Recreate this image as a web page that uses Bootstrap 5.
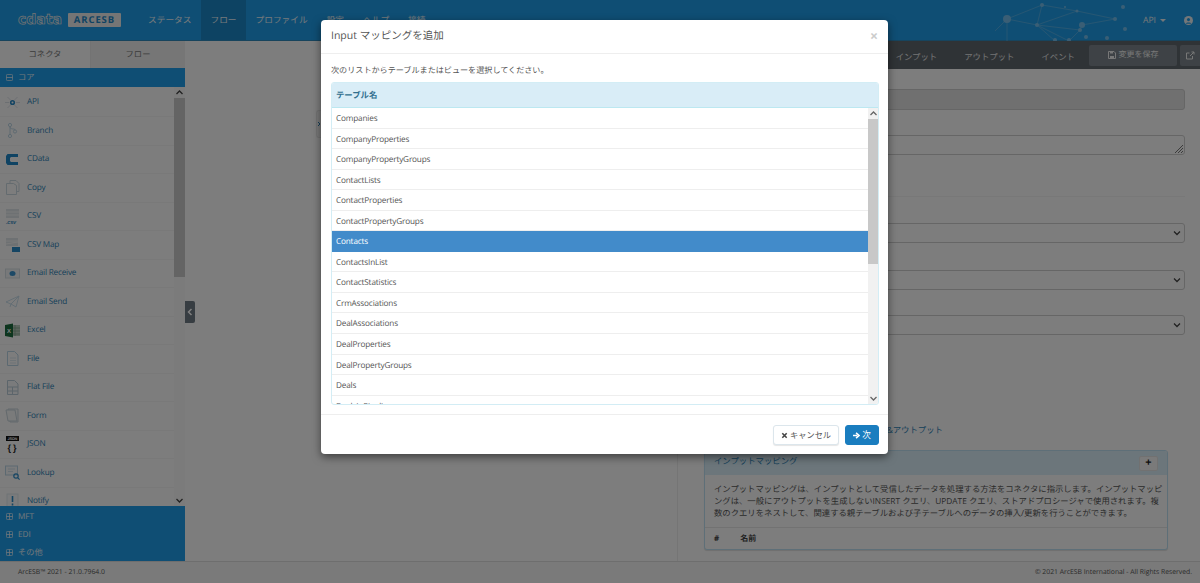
<!doctype html>
<html lang="ja">
<head>
<meta charset="utf-8">
<title>ArcESB</title>
<link href="https://cdn.jsdelivr.net/npm/bootstrap@5.3.0/dist/css/bootstrap.min.css" rel="stylesheet">
<style>
html,body{height:100%;overflow:hidden}
body{font-family:"Open Sans","Noto Sans CJK JP",sans-serif;font-size:8px;background:#fbfbfb;color:#555;text-rendering:geometricPrecision}
.app-page{height:583px;width:1200px;position:relative;overflow:hidden}
.top-bar{height:41px;background:#1f9de8;border-bottom:1px solid #2f88bb}
.brand-box{width:138.5px;height:40px;padding-left:18px;gap:6px;flex:none}
.brand-word{font-family:"DejaVu Sans",sans-serif;font-weight:700;font-size:14px;line-height:14px;color:#1f9de8;-webkit-text-stroke:.7px #e6e6e6}
.brand-tag{background:#eaeaea;color:#1f86c6;font-weight:700;font-size:9.5px;letter-spacing:.9px;width:53px;text-align:center;line-height:14px;height:14px;border-radius:1px}
.top-link{height:40px;line-height:41px;color:#eaf3f8;font-size:8.7px;padding:0 9.5px;text-decoration:none}
.top-link.now{background:#1a86c6}
.net-art{width:140px;height:41px;margin-left:auto;flex:none}
.api-menu{color:#e8eef2;font-size:8.6px;width:40.5px;height:40px;margin-left:8px;flex:none}
.caret-mini{display:inline-block;border:3px solid transparent;border-top-color:#e8eef2;border-bottom:0;margin-left:4px;vertical-align:2px}
.user-ico{margin:16px 7.5px 0 0;flex:none}
.work-row{height:520px}
.side-col{width:185px;flex:none;display:flex;flex-direction:column}
.side-tabs{height:27px}
.side-tab{height:27px;line-height:28px;text-align:center;font-size:8.3px;flex:0 0 91px;color:#888}
.side-tab.on{background:#fbfbfb;color:#777;border-right:1px solid #e6e6e6}
.side-tab.off{background:#ececec;flex:1;color:#777}
.grp-head{background:#1f9de8;color:#e4f0f8;font-size:8.2px;height:19px;line-height:18px;padding-left:6px;display:flex;align-items:center;gap:5px}
.grp-sign{width:7px;height:7px;flex:none}
.conn-wrap{height:419px;overflow:hidden;background:#fbfbfb}
.conn-list{flex:1;overflow:hidden;padding-top:1.5px}
.conn-item{height:28.5px;border-bottom:1px solid #f2f2f2;display:flex;align-items:center;padding-left:5px;gap:7px;color:#2b7fb3;font-size:8.2px;letter-spacing:-.2px;white-space:nowrap}
.conn-ico{width:15px;height:17px;flex:none}
.sb-track{width:11px;flex:none;background:#f1f1f1;display:flex;flex-direction:column;align-items:center}
.sb-side{background:#f6f6f6}
.sb-btn{height:11px;width:11px;flex:none;display:block}
.sb-thumb{width:11px;background:#c8c8c8;flex:none}
.tbl-scroll .sb-track,.tbl-scroll .sb-thumb{width:10px}
.grp-foot{height:55px;background:#1f9de8;display:flex;flex-direction:column;padding-top:1.500px}
.grp-foot .grp-head{height:19px;background:none}
.mid-col{width:492px;flex:none;position:relative}
.pull-tab{position:absolute;left:0;top:260px;width:10px;height:22px;background:#6e7a84;border-radius:0 2px 2px 0;display:flex;align-items:center;justify-content:center}
.pull-tab2{position:absolute;left:131px;top:69px;width:6px;height:28px;background:#f2f2f2;border-radius:3px 0 0 3px;border:1px solid #e5e5e5;border-right:0;display:flex;align-items:center}
.right-col{flex:1;border-left:1px solid #ebebeb}
.dark-bar{height:28px;background:#5e666c;margin-left:-1px;display:flex;align-items:center;justify-content:flex-end}
.dark-link{color:#f2f2f2;font-size:8.4px;margin-right:27px;padding-top:6px;opacity:.92}
.dark-link.last-tab{margin-right:14px}
.save-btn{width:88px;height:21px;background:#7c858c;border-radius:2px;color:#eee;font-size:8px;display:flex;align-items:center;justify-content:center;gap:3px;margin-right:3px}
.ext-btn{width:20px;height:21px;background:#7c858c;border-radius:2px 0 0 2px;display:flex;align-items:center;justify-content:center}
.form-box{padding:20px 15.5px 0 26px;display:flex;flex-direction:column}
.fake-input{height:21px;border:1px solid #ccc;border-radius:3px;background:#e0e0e0;margin-bottom:25px}
.fake-area{height:20px;border:1px solid #ccc;border-radius:3px;background:#fbfbfb;margin-bottom:41px;position:relative}
.fake-line{height:1px;background:#f0f0f0;margin-bottom:26px}
.fake-sel{height:20px;border:1px solid #ccc;border-radius:3px;background:#fbfbfb;display:flex;justify-content:flex-end;align-items:center;padding-right:3px}
.sel-a{margin-bottom:27px}
.sel-b{margin-bottom:25px}
.grip{position:absolute;right:1px;bottom:1px;width:9px;height:9px}
.out-link{color:#2b7fb3;font-size:8.4px;margin-top:87px;height:14px;line-height:17px;text-align:right;padding-right:257px;white-space:nowrap}
.map-panel{margin:14px 0 0 26px;width:464px;height:100px;border:1px solid #bcdff1;border-radius:3px;background:#fbfbfb;box-shadow:0 1px 1px rgba(0,0,0,.12);overflow:hidden}
.map-head{height:24px;background:#d9edf7;display:flex;justify-content:space-between;align-items:flex-start;padding:1px 9px 0 9px;color:#2b7fb3;font-size:8.4px;line-height:19px}
.plus-btn{width:19px;height:15px;background:#f5f5f5;border:1px solid #e3e3e3;border-radius:2px;margin-top:4px;font-weight:700;font-size:11px;line-height:12px;color:#222;text-align:center}
.map-text{padding:9px 9px 0;font-size:8.36px;line-height:12.1px;color:#555;height:53px;border-bottom:1px solid #e4e4e4;white-space:nowrap}
.map-cols{display:flex;padding:5px 9px;font-size:8px;font-weight:700;color:#444;gap:21px}
.foot-bar{height:22px;background:#f4f4f4;border-top:1px solid #ddd;display:flex;justify-content:space-between;align-items:center;padding:0 8px 0 18px;color:#555;font-size:6.8px}
.dim-layer{position:absolute;inset:0;background:rgba(0,0,0,.5);z-index:1050}
.dlg-box{position:absolute;left:321px;top:20px;width:567px;height:434px;z-index:1055;background:#fff;border-radius:4px;box-shadow:0 3px 9px rgba(0,0,0,.5);display:flex;flex-direction:column}
.dlg-head{height:34px;border-bottom:1px solid #eee;display:flex;align-items:center;justify-content:space-between;padding:1px 10px 0;color:#555;font-size:10.5px;flex:none}
.dlg-x{color:#ccc;font-size:14px;font-weight:700;line-height:1}
.dlg-body{padding:10px 9px 10px 10px;flex:1;min-height:0;color:#555;font-size:8.1px}
.dlg-lead{line-height:13px;margin-bottom:5px}
.tbl-box{height:323px;border:1px solid #d3edf5;border-radius:3px;overflow:hidden;display:flex;flex-direction:column}
.tbl-head{height:25px;flex:none;background:#d9edf7;color:#31708f;font-weight:700;padding-left:4px;line-height:25px;font-size:8.4px;border-bottom:1px solid #bce8f1}
.tbl-scroll{flex:1;display:flex;min-height:0}
.tbl-rows{flex:1;overflow:hidden;min-width:0}
.tbl-row{height:20.55px;line-height:21.5px;border-bottom:1px solid #eee;padding-left:4px;color:#555;font-size:8.2px;letter-spacing:-.16px}
.tbl-row.sel{background:#428bca;color:#fff;border-bottom-color:#428bca}
.dlg-foot{height:40px;flex:none;border-top:1px solid #eee;display:flex;justify-content:flex-end;align-items:center;padding:0 9px;gap:6px}
.btn-cancel{width:66px;height:20px;padding:0;background:#fff;border:1px solid #dce6ec;border-radius:3px;color:#555;font-size:8.2px;line-height:18px;box-shadow:0 1px 1px rgba(0,0,0,.1)}
.btn-next{width:34px;height:20px;padding:0;background:#1a7dbf;border:1px solid #1a7dbf;border-radius:3px;color:#fff;font-size:8.6px;line-height:18px}
.btn-ico{width:7px;height:7px;vertical-align:-1px}
</style>
</head>
<body>
<div class="app-page">
  <header class="top-bar d-flex align-items-start">
    <div class="brand-box d-flex align-items-center">
      <span class="brand-word">cdata</span><span class="brand-tag">ARCESB</span>
    </div>
    <a class="top-link" href="#">ステータス</a>
    <a class="top-link now" href="#">フロー</a>
    <a class="top-link" href="#">プロファイル</a>
    <a class="top-link" href="#">設定</a>
    <a class="top-link" href="#">ヘルプ</a>
    <a class="top-link" href="#">接続</a>
    <svg class="net-art" viewBox="0 0 140 41">
      <g stroke="#6db8e6" stroke-width=".6" fill="none">
        <path d="M12 19 47 5 M47 5 42 25 M12 19 42 25 M42 25 82 11 M47 5 82 11 M82 11 120 19 M42 25 85 30 M42 25 60 41 M42 25 74 41 M12 19 12 41 M12 19 -10 41 M85 30 87 25 M87 25 120 19 M85 30 74 41"/>
      </g>
      <g fill="#74bdea">
        <circle cx="12" cy="19" r="4"/><circle cx="47" cy="5" r="2"/><circle cx="42" cy="25" r="2"/><circle cx="82" cy="11" r="1.500"/><circle cx="87" cy="25" r="3"/><circle cx="85" cy="30" r="2"/><circle cx="112" cy="38" r="2"/><circle cx="128" cy="7" r="2"/><circle cx="91" cy="37" r="2"/><circle cx="120" cy="19" r="2"/><circle cx="70" cy="7" r="1"/><circle cx="130" cy="29" r="2"/><circle cx="74" cy="40" r="2"/><circle cx="60" cy="40" r="2"/>
      </g>
    </svg>
    <div class="api-menu d-flex align-items-center"><span>API</span><i class="caret-mini"></i></div>
    <svg class="user-ico" width="9" height="9" viewBox="0 0 10 10"><circle cx="5" cy="5" r="5" fill="#e8eef2"/><circle cx="5" cy="4" r="1.700" fill="#1f9de8"/><path d="M1.800 8.600c.6-2 5.800-2 6.400 0" fill="#1f9de8"/></svg>
  </header>
  <div class="work-row d-flex">
    <aside class="side-col">
      <div class="side-tabs d-flex">
        <div class="side-tab on">コネクタ</div>
        <div class="side-tab off">フロー</div>
      </div>
      <div class="grp-head"><svg class="grp-sign" viewBox="0 0 9 9"><rect x=".5" y=".5" width="8" height="8" rx="1.500" fill="none" stroke="#e4f0f8"/><path d="M.5 4.500h8" stroke="#e4f0f8"/></svg>コア</div>
      <div class="conn-wrap d-flex">
        <div class="conn-list">
          <div class="conn-item"><svg class="conn-ico" viewBox="0 0 15 17"><g stroke="#cfd8de" stroke-width=".8"><path d="M0 8.500h4M11 8.500h4M2.500 3l3 3M12.500 3l-3 3M2.500 14l3-3M12.500 14l-3-3"/></g><circle cx="7.500" cy="8.500" r="1.800" fill="none" stroke="#2b8ac6" stroke-width="1.600"/></svg>API</div>
          <div class="conn-item"><svg class="conn-ico" viewBox="0 0 15 17"><g fill="none" stroke="#b5cfe0" stroke-width=".9"><circle cx="5" cy="3" r="1.600"/><circle cx="5" cy="14" r="1.600"/><circle cx="10" cy="9.500" r="1.600"/><path d="M5 4.600v7.800M5 5c0 3 5 1 5 3"/></g></svg>Branch</div>
          <div class="conn-item"><svg class="conn-ico" viewBox="0 0 15 17"><path d="M2.500 3h10.500v3h-7l-1 1v3l1 1h7v3h-10.500l-1.500-2v-7z" fill="#1f86c6"/></svg>CData</div>
          <div class="conn-item"><svg class="conn-ico" viewBox="0 0 15 17"><g fill="#fbfbfb" stroke="#c9d6de"><path d="M5 1.500h6l3 3v8h-9z"/><path d="M1.500 4.500h7l3 2v9h-10z"/></g></svg>Copy</div>
          <div class="conn-item"><svg class="conn-ico" viewBox="0 0 15 17"><path d="M1 1h13v9h-13z" fill="#dde3e7"/><path d="M1 4h13M1 7h13" stroke="#f5f5f5"/><text x="1" y="15.500" font-size="5.500" font-style="italic" font-weight="700" fill="#3a8cc2" font-family="Liberation Sans">.csv</text></svg>CSV</div>
          <div class="conn-item"><svg class="conn-ico" viewBox="0 0 15 17"><path d="M1 2h12v8h-12z" fill="#dce2e6"/><path d="M1 5h12M1 8l12-2" stroke="#f5f5f5"/><path d="M7 11h8v5h-8z" fill="#2b8ac6"/></svg>CSV Map</div>
          <div class="conn-item"><svg class="conn-ico" viewBox="0 0 15 17"><rect x=".5" y="4" width="14" height="9" fill="#f1f3f4" stroke="#d5dde2"/><ellipse cx="7.500" cy="8.500" rx="3" ry="2.500" fill="#3a92cc"/></svg>Email Receive</div>
          <div class="conn-item"><svg class="conn-ico" viewBox="0 0 15 17"><g fill="none" stroke="#c3d9e6" stroke-width=".9"><path d="M1 9l13-6-3 11-5-3z"/><path d="M14 3l-8 8-1 3"/></g></svg>Email Send</div>
          <div class="conn-item"><svg class="conn-ico" viewBox="0 0 15 17"><rect x="6" y="3" width="9" height="11" fill="#b6c9bb"/><path d="M6 6h9M6 9h9M6 12h9M10 3v11" stroke="#7a9b84" stroke-width=".7"/><path d="M0 3l8-1.500v14l-8-1.500z" fill="#1a6b3c"/><text x="2" y="11" font-size="6" font-weight="700" fill="#fff" font-family="Liberation Sans">X</text></svg>Excel</div>
          <div class="conn-item"><svg class="conn-ico" viewBox="0 0 15 17"><path d="M2.500 1.500h7l3.500 3.500v10.500h-10.500z" fill="#fbfbfb" stroke="#b9d3e3"/><path d="M5 8h6M5 10.500h6M5 13h6" stroke="#cfdfe9" stroke-width=".7"/></svg>File</div>
          <div class="conn-item"><svg class="conn-ico" viewBox="0 0 15 17"><path d="M2.500 1.500h7l3.500 3.500v10.500h-10.500z" fill="#f5f7f8" stroke="#b9cbd6"/><path d="M2.500 8h10.500M2.500 12h10.500M7.500 8v7.500" stroke="#b9cbd6"/></svg>Flat File</div>
          <div class="conn-item"><svg class="conn-ico" viewBox="0 0 15 17"><g fill="#f4f6f7" stroke="#c6d2d9"><path d="M3 2h10v13h-8z"/><path d="M1 3h9l2 11h-9z"/></g></svg>Form</div>
          <div class="conn-item"><svg class="conn-ico" viewBox="0 0 15 17"><rect x="1" y="0" width="13" height="5" fill="#111"/><text x="2.500" y="4" font-size="3.800" font-weight="700" fill="#fff" font-family="Liberation Sans">JSON</text><text x="2.500" y="14.500" font-size="9" font-weight="700" fill="#222" font-family="Liberation Sans">{ }</text></svg>JSON</div>
          <div class="conn-item"><svg class="conn-ico" viewBox="0 0 15 17"><rect x=".5" y="2" width="12" height="9" fill="#f5f7f8" stroke="#b9d3e3"/><path d="M3 5h7M3 7.500h5" stroke="#cfdfe9"/><circle cx="11" cy="12" r="2.200" fill="none" stroke="#2b8ac6" stroke-width="1.200"/><path d="M12.600 13.600l2 2" stroke="#2b8ac6" stroke-width="1.200"/></svg>Lookup</div>
          <div class="conn-item"><svg class="conn-ico" viewBox="0 0 15 17"><rect x="2" y="1" width="11" height="13" fill="#f5f7f8" stroke="#dde6eb"/><path d="M7.500 3v6M7.500 10.500v2" stroke="#2b8ac6" stroke-width="1.600"/></svg>Notify</div>
        </div>
        <div class="sb-track sb-side">
          <svg class="sb-btn" viewBox="0 0 11 11"><path d="M2.500 7l3-3 3 3" fill="none" stroke="#444" stroke-width="1.300"/></svg>
          <div class="sb-thumb" style="height:179px"></div>
          <div class="flex-grow-1"></div>
          <svg class="sb-btn" viewBox="0 0 11 11"><path d="M2.500 4l3 3 3-3" fill="none" stroke="#444" stroke-width="1.300"/></svg>
        </div>
      </div>
      <div class="grp-foot">
        <div class="grp-head"><svg class="grp-sign" viewBox="0 0 9 9"><rect x=".5" y=".5" width="8" height="8" rx="1.500" fill="none" stroke="#e4f0f8"/><path d="M.5 4.500h8M4.500 .5v8" stroke="#e4f0f8"/></svg>MFT</div>
        <div class="grp-head"><svg class="grp-sign" viewBox="0 0 9 9"><rect x=".5" y=".5" width="8" height="8" rx="1.500" fill="none" stroke="#e4f0f8"/><path d="M.5 4.500h8M4.500 .5v8" stroke="#e4f0f8"/></svg>EDI</div>
        <div class="grp-head"><svg class="grp-sign" viewBox="0 0 9 9"><rect x=".5" y=".5" width="8" height="8" rx="1.500" fill="none" stroke="#e4f0f8"/><path d="M.5 4.500h8M4.500 .5v8" stroke="#e4f0f8"/></svg>その他</div>
      </div>
    </aside>
    <div class="mid-col">
      <div class="pull-tab"><svg width="6" height="8" viewBox="0 0 6 8"><path d="M4.500 1l-3 3 3 3" fill="none" stroke="#fff" stroke-width="1.500"/></svg></div>
      <div class="pull-tab2"><svg width="4" height="6" viewBox="0 0 4 6"><path d="M1 1l2 2-2 2" fill="none" stroke="#2b7fb3"/></svg></div>
    </div>
    <main class="right-col">
      <div class="dark-bar">
        <span class="dark-link">インプット</span><span class="dark-link">アウトプット</span><span class="dark-link last-tab">イベント</span>
        <div class="save-btn"><svg width="8" height="8" viewBox="0 0 8 8"><path d="M.5.5h5.500l1.500 1.500v5.500h-7z" fill="none" stroke="#eee"/><path d="M2 .5h3v2h-3zM2 5h4v2.500h-4z" fill="#eee"/></svg>変更を保存</div>
        <div class="ext-btn"><svg width="9" height="9" viewBox="0 0 9 9"><path d="M6.500 5v3h-6v-6h3M4 5l4-4M5.500 1h2.500v2.500" fill="none" stroke="#eee"/></svg></div>
      </div>
      <div class="form-box">
        <div class="fake-input"></div>
        <div class="fake-area"><svg class="grip" viewBox="0 0 9 9"><path d="M9 1l-8 8M9 4l-5 5M9 7l-2 2" stroke="#555" stroke-width=".8"/></svg></div>
        <div class="fake-line"></div>
        <div class="fake-sel sel-a"><svg width="8" height="6" viewBox="0 0 8 6"><path d="M1 1.500l3 3 3-3" fill="none" stroke="#444" stroke-width="1.300"/></svg></div>
        <div class="fake-sel sel-b"><svg width="8" height="6" viewBox="0 0 8 6"><path d="M1 1.500l3 3 3-3" fill="none" stroke="#444" stroke-width="1.300"/></svg></div>
        <div class="fake-sel"><svg width="8" height="6" viewBox="0 0 8 6"><path d="M1 1.500l3 3 3-3" fill="none" stroke="#444" stroke-width="1.300"/></svg></div>
      </div>
      <div class="out-link">インプット&amp;アウトプット</div>
      <section class="map-panel">
        <div class="map-head"><span>インプットマッピング</span><div class="plus-btn">+</div></div>
        <div class="map-text">インプットマッピングは、インプットとして受信したデータを処理する方法をコネクタに指示します。インプットマッピ<br>ングは、一般にアウトプットを生成しないINSERT クエリ、UPDATE クエリ、ストアドプロシージャで使用されます。複<br>数のクエリをネストして、関連する親テーブルおよび子テーブルへのデータの挿入/更新を行うことができます。</div>
        <div class="map-cols"><span>#</span><span>名前</span></div>
      </section>
    </main>
  </div>
  <footer class="foot-bar"><span>ArcESB™ 2021 - 21.0.7964.0</span><span>© 2021 ArcESB International - All Rights Reserved.</span></footer>

  <div class="dim-layer"></div>
  <div class="dlg-box">
    <div class="dlg-head"><span>Input マッピングを追加</span><span class="dlg-x">×</span></div>
    <div class="dlg-body">
      <div class="dlg-lead">次のリストからテーブルまたはビューを選択してください。</div>
      <div class="tbl-box">
        <div class="tbl-head">テーブル名</div>
        <div class="tbl-scroll">
          <div class="tbl-rows">
            <div class="tbl-row">Companies</div>
            <div class="tbl-row">CompanyProperties</div>
            <div class="tbl-row">CompanyPropertyGroups</div>
            <div class="tbl-row">ContactLists</div>
            <div class="tbl-row">ContactProperties</div>
            <div class="tbl-row">ContactPropertyGroups</div>
            <div class="tbl-row sel">Contacts</div>
            <div class="tbl-row">ContactsInList</div>
            <div class="tbl-row">ContactStatistics</div>
            <div class="tbl-row">CrmAssociations</div>
            <div class="tbl-row">DealAssociations</div>
            <div class="tbl-row">DealProperties</div>
            <div class="tbl-row">DealPropertyGroups</div>
            <div class="tbl-row">Deals</div>
            <div class="tbl-row">DealsInPipeline</div>
          </div>
          <div class="sb-track">
            <svg class="sb-btn" viewBox="0 0 11 11"><path d="M2.500 7l3-3 3 3" fill="none" stroke="#666" stroke-width="1.300"/></svg>
            <div class="sb-thumb" style="height:145px"></div>
            <div class="flex-grow-1"></div>
            <svg class="sb-btn" viewBox="0 0 11 11"><path d="M2.500 4l3 3 3-3" fill="none" stroke="#666" stroke-width="1.300"/></svg>
          </div>
        </div>
      </div>
    </div>
    <div class="dlg-foot">
      <button type="button" class="btn btn-cancel"><svg class="btn-ico" viewBox="0 0 8 8"><path d="M1.500 1.500l5 5M6.500 1.500l-5 5" stroke="#444" stroke-width="1.800"/></svg> キャンセル</button>
      <button type="button" class="btn btn-next"><svg class="btn-ico" viewBox="0 0 8 8"><path d="M0 4h5M3.500 1l3.500 3-3.500 3" fill="none" stroke="#fff" stroke-width="1.800"/></svg> 次</button>
    </div>
  </div>
</div>
<script src="https://cdn.jsdelivr.net/npm/bootstrap@5.3.0/dist/js/bootstrap.bundle.min.js"></script>
</body>
</html>
